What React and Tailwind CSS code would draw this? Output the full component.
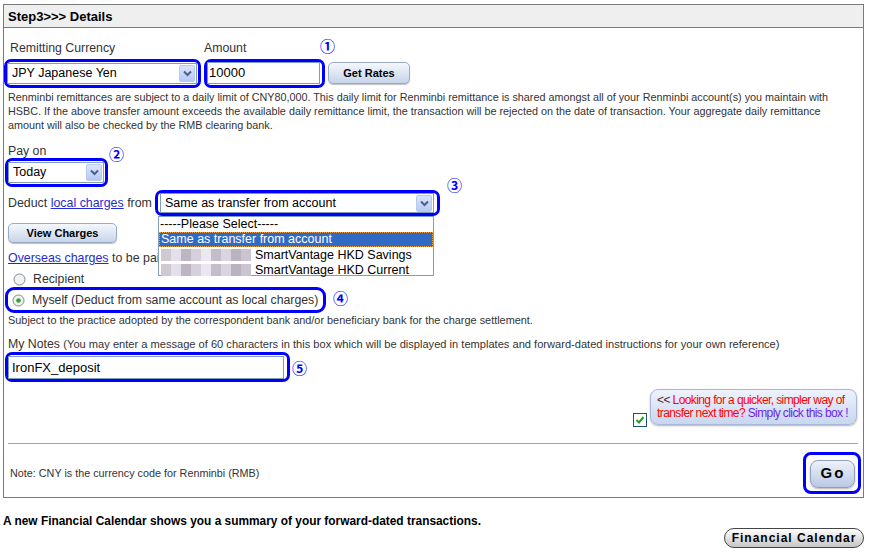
import React from "react";

const Chevron = () => (
  <svg width="9" height="7" viewBox="0 0 9 7">
    <path d="M1 1.5 L4.5 5 L8 1.5" fill="none" stroke="#4d6185" strokeWidth="2" />
  </svg>
);

function SelectBox({ value, className }) {
  return (
    <div className={`flex items-center bg-white border border-[#7f9db9] ${className}`}>
      <span className="flex-1 pl-[4px] text-[12.5px] text-black whitespace-nowrap overflow-hidden">{value}</span>
      <span className="w-[16px] h-[17px] mr-[1px] rounded-[2px] bg-linear-to-b from-[#dbe5fd] to-[#b6c9f6] border border-[#b9c9ef] flex items-center justify-center">
        <Chevron />
      </span>
    </div>
  );
}

const Mark = ({ n, className }) => (
  <span className={`text-[#0000ff] text-[15px] leading-[15px] font-bold font-['Noto_Sans_CJK_JP',sans-serif] ${className}`}>{n}</span>
);

const Radio = ({ checked }) => (
  <svg width="13" height="13" viewBox="0 0 13 13">
    <circle cx="6.5" cy="6.5" r="5.5" fill="#f2f2ee" stroke="#7f8a99" strokeWidth="1" />
    {checked && <circle cx="6.5" cy="6.5" r="2.3" fill="#2fa53a" />}
  </svg>
);

const Blur = () => (
  <span className="flex h-[12px] mr-[4px]">
    {["#cfc9d1", "#e4e0ea", "#bdb6c2", "#d6d0dc", "#eae7f0", "#c3bdc9", "#d9d4df", "#b9b3c0", "#c9c4cf"].map((c, i) => (
      <span key={i} className="w-[10px] h-[12px]" style={{ background: c }} />
    ))}
  </span>
);

export default function App() {
  return (
    <div className="w-[873px] h-[559px] bg-white font-['Liberation_Sans',Arial,sans-serif] text-[#333] pt-[4px] pl-[3px]">
      <div className="w-[861px] border border-[#7a7a7a]">
        <div className="h-[23px] bg-[#efefef] border-b border-[#7a7a7a] flex items-center pl-[4px] pt-[2px] text-[13px] font-bold text-black">
          Step3&gt;&gt;&gt; Details
        </div>

        {/* currency / amount */}
        <div className="flex h-[21px] mt-[9px]">
          <div className="ml-[6px] w-[194px] mt-[4px] text-[12.3px] leading-[14px]">Remitting Currency</div>
          <div className="w-[116px] mt-[4px] text-[12.3px] leading-[14px]">Amount</div>
          <Mark n="①" className="mt-[1px]" />
        </div>
        <div className="flex items-center h-[30px]">
          <div className="w-[197px] h-[29px] border-[3px] border-[#0000ff] rounded-[7px] flex items-center">
            <SelectBox value="JPY Japanese Yen" className="w-[190px] h-[21px]" />
          </div>
          <div className="ml-[3px] w-[121px] h-[29px] border-[3px] border-[#0000ff] rounded-[7px] flex items-center">
            <div className="w-[113px] h-[22px] border border-[#7f9db9] bg-white text-[13px] text-black pl-[1px] leading-[20px]">10000</div>
          </div>
          <button className="ml-[3px] w-[82px] h-[22px] rounded-[5px] border border-[#9aaac6] bg-linear-to-b from-[#f5f8fd] to-[#c7d4ea] text-[11px] font-bold text-black shadow-[0_1px_1px_rgba(0,0,0,0.25)]">
            Get Rates
          </button>
        </div>

        <p className="ml-[4px] mt-[2px] text-[10.8px] leading-[14px] whitespace-nowrap">
          Renminbi remittances are subject to a daily limit of CNY80,000. This daily limit for Renminbi remittance is shared amongst all of your Renminbi account(s) you maintain with
          <br />
          HSBC. If the above transfer amount exceeds the available daily remittance limit, the transaction will be rejected on the date of transaction. Your aggregate daily remittance
          <br />
          amount will also be checked by the RMB clearing bank.
        </p>

        {/* pay on */}
        <div className="flex h-[14px] mt-[12px]">
          <div className="ml-[4px] w-[101px] text-[12.3px] leading-[14px]">Pay on</div>
          <Mark n="②" className="mt-[2px]" />
        </div>
        <div className="ml-[1px] w-[103px] h-[29px] border-[3px] border-[#0000ff] rounded-[7px] flex items-center">
          <SelectBox value="Today" className="w-[96px] h-[21px]" />
        </div>

        {/* deduct */}
        <div className="flex items-center h-[26px] mt-[3px]">
          <div className="ml-[4px] w-[147px] text-[12.4px] whitespace-nowrap">
            Deduct <span className="text-[#1f2bd0] underline">local charges</span> from
          </div>
          <div className="relative w-[285px] h-[26px] border-[3px] border-[#0000ff] rounded-[7px] flex items-center">
            <SelectBox value="Same as transfer from account" className="ml-[2px] w-[274px] h-[20px]" />
            <Mark n="③" className="absolute left-[289px] top-[-16px]" />
            <div className="absolute z-10 left-0 top-[23px] w-[276px] h-[60px] bg-white border border-[#7f9db9] text-[12.5px] text-black leading-[14px]">
              <div className="h-[15px] pl-[1px]">-----Please Select-----</div>
              <div className="h-[15px] pl-[1px] bg-[#316ac5] text-white border border-dotted border-[#e8a04a] leading-[13px]">Same as transfer from account</div>
              <div className="h-[15px] pl-[2px] flex items-center"><Blur />SmartVantage HKD Savings</div>
              <div className="h-[15px] pl-[2px] flex items-center"><Blur />SmartVantage HKD Current</div>
            </div>
          </div>
        </div>

        <button className="block ml-[4px] mt-[7px] w-[109px] h-[20px] rounded-[5px] border border-[#9aaac6] bg-linear-to-b from-[#f5f8fd] to-[#c7d4ea] text-[11px] font-bold text-black shadow-[0_1px_1px_rgba(0,0,0,0.25)]">
          View Charges
        </button>

        <div className="ml-[4px] mt-[8px] text-[12.4px] leading-[14px]">
          <span className="text-[#1f2bd0] underline">Overseas charges</span> to be paid by
        </div>

        <div className="flex items-center ml-[9px] mt-[8px] h-[13px] text-[12.3px] gap-[7px]">
          <Radio />
          <span>Recipient</span>
        </div>
        <div className="relative ml-[1px] mt-[1px] w-[321px] h-[26px] border-[3px] border-[#0000ff] rounded-[9px] flex items-center text-[12.3px] gap-[7px] pl-[4px]">
          <Radio checked />
          <span className="whitespace-nowrap">Myself (Deduct from same account as local charges)</span>
          <Mark n="④" className="absolute left-[325px] top-[0px]" />
        </div>

        <div className="ml-[4px] text-[10.9px] leading-[14px]">
          Subject to the practice adopted by the correspondent bank and/or beneficiary bank for the charge settlement.
        </div>

        <div className="ml-[4px] mt-[10px] text-[12.3px] leading-[14px] whitespace-nowrap">
          My Notes <span className="text-[11.1px]">(You may enter a message of 60 characters in this box which will be displayed in templates and forward-dated instructions for your own reference)</span>
        </div>
        <div className="relative ml-[1px] mt-[1px] w-[285px] h-[30px] border-[3px] border-[#0000ff] rounded-[7px] flex items-center">
          <div className="w-[276px] h-[23px] border border-[#7f9db9] bg-white text-[13px] text-black pl-[3px] leading-[21px]">IronFX_deposit</div>
          <Mark n="⑤" className="absolute left-[284px] top-[5px]" />
        </div>

        {/* quick template */}
        <div className="flex justify-end items-end mt-[7px] pr-[6px] h-[36px]">
          <div className="w-[14px] h-[14px] mb-[-2px] mr-[3px] border border-[#1c5180] bg-white flex items-center justify-center">
            <svg width="10" height="10" viewBox="0 0 10 10">
              <path d="M1.5 5 L4 7.5 L8.5 2" fill="none" stroke="#21a121" strokeWidth="2" />
            </svg>
          </div>
          <div className="w-[207px] h-[36px] rounded-[8px] border border-[#a8b8d8] bg-linear-to-b from-[#eef3fc] to-[#c8d6ef] shadow-[0_1px_2px_rgba(0,0,0,0.3)] pl-[6px] pt-[4px] text-[12px] tracking-[-0.6px] leading-[13px] whitespace-nowrap">
            <span className="text-[#552222]">&lt;&lt; </span>
            <span className="text-[#ff0000]">Looking for a quicker, simpler way of</span>
            <br />
            <span className="text-[#ff0000]">transfer next time? </span>
            <span className="text-[#6a1fe8]">Simply click this box !</span>
          </div>
        </div>

        <div className="ml-[4px] mr-[5px] mt-[18px] h-px bg-[#a5a5a5]" />

        <div className="flex items-center h-[42px] mt-[8px] mb-[3px]">
          <div className="ml-[6px] text-[10.8px] leading-[14px] flex-1">Note: CNY is the currency code for Renminbi (RMB)</div>
          <div className="mr-[2px] w-[58px] h-[42px] border-[3px] border-[#0000ff] rounded-[8px] flex items-center justify-center">
            <button className="w-[45px] h-[28px] mt-[1px] rounded-[8px] border border-[#8ea0c0] bg-linear-to-b from-[#eef2fa] to-[#b9c8e4] text-[15px] font-bold text-black tracking-[2px] pl-[2px] shadow-[0_1px_2px_rgba(0,0,0,0.3)]">
              Go
            </button>
          </div>
        </div>
      </div>

      <div className="mt-[16px] text-[11.9px] leading-[14px] font-bold text-black">
        A new Financial Calendar shows you a summary of your forward-dated transactions.
      </div>
      <div className="flex justify-end w-[861px]">
        <button className="w-[140px] h-[20px] rounded-full border border-[#444] bg-linear-to-b from-white to-[#c6c6c6] text-[12px] font-bold text-black tracking-[1px]">
          Financial Calendar
        </button>
      </div>
    </div>
  );
}
